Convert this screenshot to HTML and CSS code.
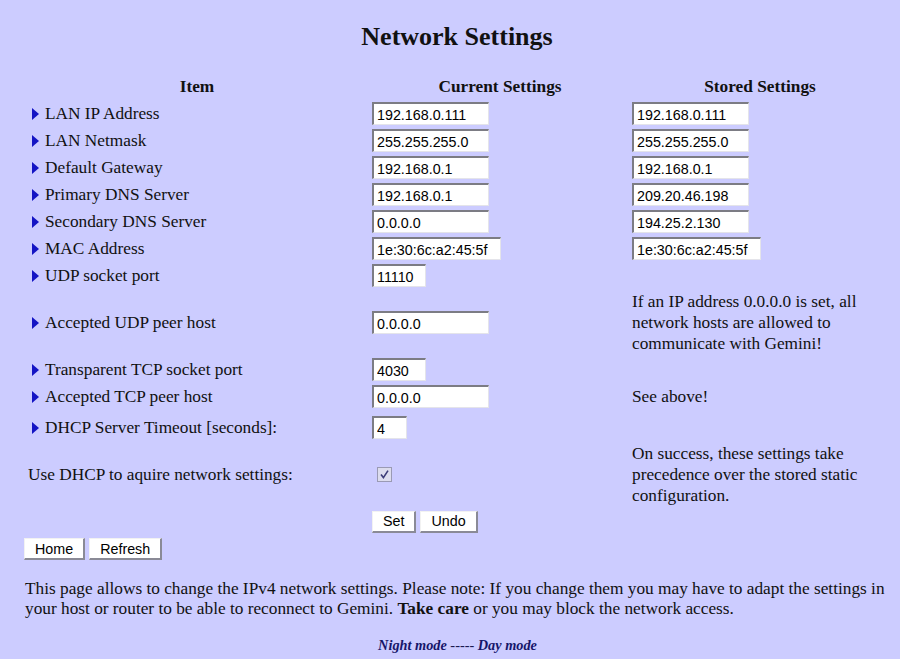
FILE: index.html
```html
<!DOCTYPE html>
<html>
<head>
<meta charset="utf-8">
<title>Network Settings</title>
<link rel="stylesheet" href="styles.css">
</head>
<body>
<div class="page">
  <h1 class="title">Network Settings</h1>
  <table class="settings">
    <colgroup><col class="c1"><col class="c2"><col class="c3"></colgroup>
    <tr class="head"><th>Item</th><th>Current Settings</th><th>Stored Settings</th></tr>
    <tr><td class="lbl"><span class="tri"></span>LAN IP Address</td><td class="val"><input class="f w117" value="192.168.0.111"></td><td class="val"><input class="f w117" value="192.168.0.111"></td></tr>
    <tr><td class="lbl"><span class="tri"></span>LAN Netmask</td><td class="val"><input class="f w117" value="255.255.255.0"></td><td class="val"><input class="f w117" value="255.255.255.0"></td></tr>
    <tr><td class="lbl"><span class="tri"></span>Default Gateway</td><td class="val"><input class="f w117" value="192.168.0.1"></td><td class="val"><input class="f w117" value="192.168.0.1"></td></tr>
    <tr><td class="lbl"><span class="tri"></span>Primary DNS Server</td><td class="val"><input class="f w117" value="192.168.0.1"></td><td class="val"><input class="f w117" value="209.20.46.198"></td></tr>
    <tr><td class="lbl"><span class="tri"></span>Secondary DNS Server</td><td class="val"><input class="f w117" value="0.0.0.0"></td><td class="val"><input class="f w117" value="194.25.2.130"></td></tr>
    <tr><td class="lbl"><span class="tri"></span>MAC Address</td><td class="val"><input class="f w129" value="1e:30:6c:a2:45:5f"></td><td class="val"><input class="f w129" value="1e:30:6c:a2:45:5f"></td></tr>
    <tr><td class="lbl"><span class="tri"></span>UDP socket port</td><td class="val"><input class="f w54" value="11110"></td><td class="val"></td></tr>
    <tr><td class="lbl"><span class="tri"></span>Accepted UDP peer host</td><td class="val"><input class="f w117" value="0.0.0.0"></td><td class="note">If an IP address 0.0.0.0 is set, all network hosts are allowed to communicate with Gemini!</td></tr>
    <tr><td class="lbl"><span class="tri"></span>Transparent TCP socket port</td><td class="val"><input class="f w54" value="4030"></td><td class="val"></td></tr>
    <tr><td class="lbl"><span class="tri"></span>Accepted TCP peer host</td><td class="val"><input class="f w117" value="0.0.0.0"></td><td class="note">See above!</td></tr>
    <tr class="gap"><td class="lbl"><span class="tri"></span>DHCP Server Timeout [seconds]:</td><td class="val"><input class="f w35" value="4"></td><td class="val"></td></tr>
    <tr><td class="lbl plain">Use DHCP to aquire network settings:</td><td class="val"><span class="chk"><svg width="15" height="15" viewBox="0 0 15 15"><rect x="0.5" y="0.5" width="14" height="14" fill="#dcdcee" stroke="#9a9ab4"/><path d="M4 7.6 L6.4 10.6 L11 3.6" fill="none" stroke="#3c3c78" stroke-width="1.6"/></svg></span></td><td class="note">On success, these settings take precedence over the stored static configuration.</td></tr>
    <tr><td></td><td class="val"><button class="btn">Set</button><button class="btn">Undo</button></td><td></td></tr>
  </table>
  <div class="nav"><button class="btn">Home</button><button class="btn">Refresh</button></div>
  <p class="info">This page allows to change the IPv4 network settings. Please note: If you change them you may have to adapt the settings in your host or router to be able to reconnect to Gemini. <b>Take care</b> or you may block the network access.</p>
  <div class="modes"><a class="mode">Night mode</a> ----- <a class="mode">Day mode</a></div>
</div>
</body>
</html>
```
FILE: styles.css
```css
html, body {
  margin: 0;
  padding: 0;
  background: #ccccff;
}
body {
  font-family: "Liberation Serif", "Times New Roman", serif;
  font-size: 17.3px;
  color: #111;
}
.page {
  padding: 0 10px 0 24px;
}
.title {
  margin: 0;
  padding-top: 22px;
  height: 30px;
  line-height: 30px;
  font-size: 26px;
  font-weight: bold;
  text-align: center;
  margin-bottom: 20px;
}
.settings {
  border-collapse: separate;
  border-spacing: 0 2px;
  width: 866px;
  table-layout: fixed;
}
.c1 { width: 346px; }
.c2 { width: 260px; }
.c3 { width: 260px; }
.settings th {
  height: 25px;
  padding: 0;
  font-size: 17.3px;
  font-weight: bold;
  text-align: center;
  vertical-align: middle;
}
.settings td {
  height: 23px;
  padding: 1px 2px;
  vertical-align: middle;
  line-height: 21px;
}
.settings td.val {
  line-height: 0;
}
.settings td.lbl {
  padding-left: 8px;
  white-space: nowrap;
}
.settings td.lbl.plain {
  padding-left: 4px;
}
.tri {
  display: inline-block;
  width: 0;
  height: 0;
  border-top: 6px solid transparent;
  border-bottom: 6px solid transparent;
  border-left: 7px solid #1414c4;
  margin-right: 6px;
  vertical-align: -1px;
}
.note {
  padding-right: 8px !important;
}
.gap td {
  padding-top: 5px;
}
.f {
  box-sizing: border-box;
  height: 23px;
  margin: 0;
  padding: 1px 3px 0;
  font-family: "Liberation Sans", Arial, sans-serif;
  font-size: 14.3px;
  line-height: normal;
  color: #000;
  background: #fff;
  border-style: solid;
  border-width: 2px 1px 1px 2px;
  border-color: #7c7c84 #e4e4ea #e4e4ea #7c7c84;
  outline: none;
  vertical-align: top;
}
.w117 { width: 117px; }
.w129 { width: 129px; }
.w54 { width: 54px; }
.w35 { width: 35px; }
.chk {
  display: inline-block;
  margin-left: 5px;
  height: 15px;
  vertical-align: top;
}
.chk svg { display: block; }
.btn {
  box-sizing: border-box;
  height: 22px;
  margin: 0 4px 0 0;
  padding: 0 10px;
  font-family: "Liberation Sans", Arial, sans-serif;
  font-size: 14.3px;
  color: #000;
  background: #fff;
  border-style: solid;
  border-width: 1px 2px 2px 1px;
  border-color: #f2f2f2 #8a8a96 #8a8a96 #f2f2f2;
  vertical-align: top;
  line-height: 18px;
}
.nav {
  margin-top: 2px;
  height: 22px;
}
.info {
  margin: 19px 0 0 1px;
  line-height: 20px;
  font-size: 17.3px;
}
.modes {
  margin-top: 18px;
  text-align: center;
  padding-left: 1px;
  font-size: 14.3px;
  font-style: italic;
  color: #1a1a50;
}
.mode {
  font-weight: bold;
  color: #16166a;
}
```
